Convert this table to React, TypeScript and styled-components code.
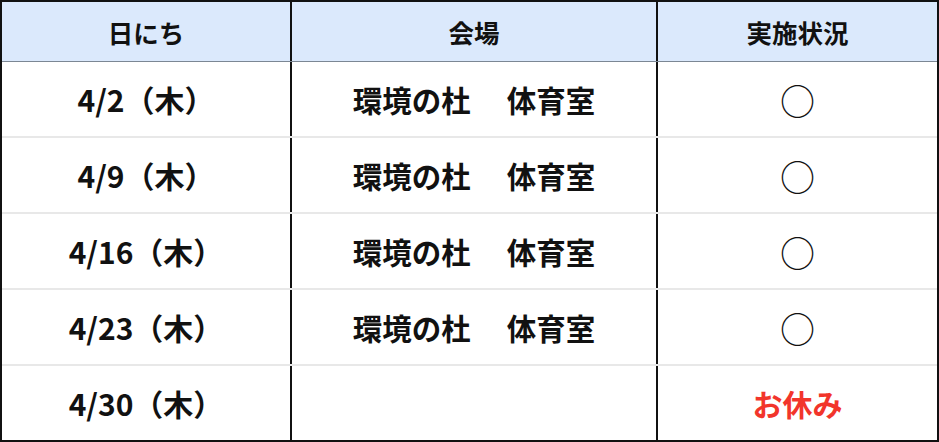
import React from 'react';
import styled, { createGlobalStyle } from 'styled-components';

const GlobalStyle = createGlobalStyle`
	html, body {
		margin: 0;
		padding: 0;
		background: #ffffff;
	}
	body {
		font-family: 'Noto Sans CJK JP', 'Noto Sans', sans-serif;
		color: #111111;
	}
	* {
		box-sizing: border-box;
	}
`;

const Table = styled.div`
	width: 939px;
	height: 442px;
	border: 2px solid #111111;
	display: flex;
	flex-direction: column;
`;

interface RowProps {
	head?: boolean;
	first?: boolean;
}

const Row = styled.div<RowProps>`
	display: grid;
	grid-template-columns: 290px 366px 1fr;
	height: ${(props) => (props.head ? '60px' : props.first ? '74px' : '76px')};
	background: ${(props) => (props.head ? '#dbe9fc' : '#ffffff')};
	border-bottom: ${(props) => (props.head ? '1px solid #7c8794' : 'none')};
	border-top: ${(props) => (props.head || props.first ? 'none' : '2px solid #e8e8e8')};
	font-size: ${(props) => (props.head ? '25.5px' : '29.5px')};
`;

const Cell = styled.div`
	display: flex;
	align-items: center;
	justify-content: center;
	font-weight: 700;
	white-space: pre;
	border-right: 2px solid #111111;
	&:last-child {
		border-right: none;
	}
`;

const DateText = styled.span`
	font-size: 30px;
`;

const Mark = styled.span`
	font-weight: 400;
	font-size: 35px;
	line-height: 1;
`;

const Closed = styled.span`
	color: #f2352b;
	font-size: 30px;
`;

interface Entry {
	date: string;
	place: string;
	open: boolean;
}

const entries: Entry[] = [
	{ date: '4/2（木）', place: '環境の杜　 体育室', open: true },
	{ date: '4/9（木）', place: '環境の杜　 体育室', open: true },
	{ date: '4/16（木）', place: '環境の杜　 体育室', open: true },
	{ date: '4/23（木）', place: '環境の杜　 体育室', open: true },
	{ date: '4/30（木）', place: '', open: false },
];

const App: React.FC = () => {
	return (
		<>
			<GlobalStyle />
			<Table>
				<Row head>
					<Cell>日にち</Cell>
					<Cell>会場</Cell>
					<Cell>実施状況</Cell>
				</Row>
				{entries.map((entry, i) => (
					<Row key={entry.date} first={i === 0}>
						<Cell>
							<DateText>{entry.date}</DateText>
						</Cell>
						<Cell>{entry.place}</Cell>
						<Cell>{entry.open ? <Mark>○</Mark> : <Closed>お休み</Closed>}</Cell>
					</Row>
				))}
			</Table>
		</>
	);
};

export default App;
